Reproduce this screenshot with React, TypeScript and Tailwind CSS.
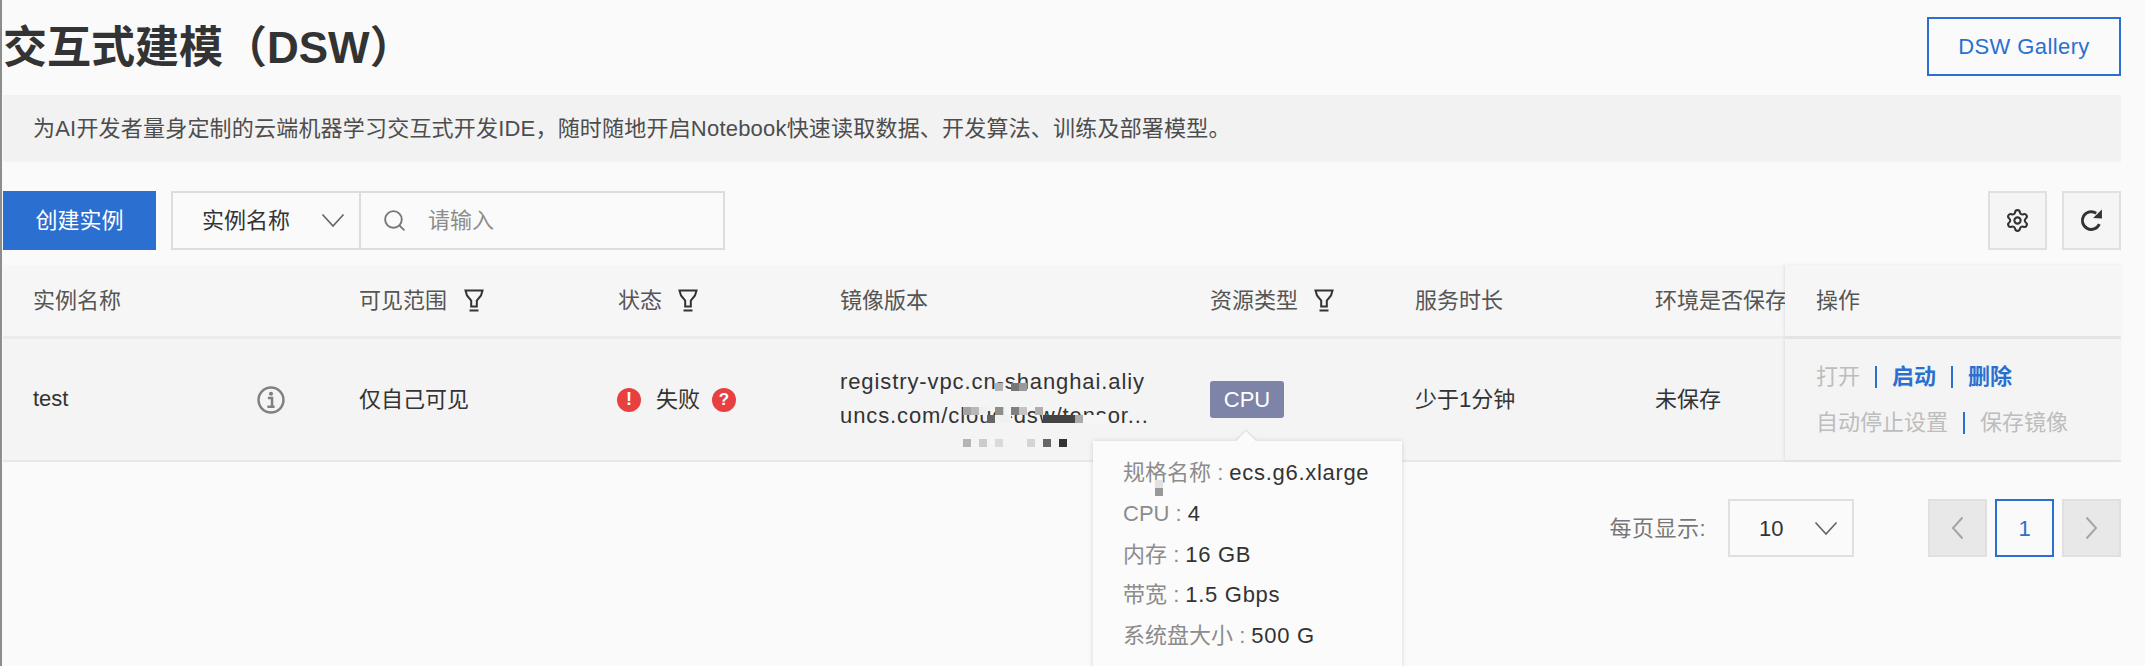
import { Search, Settings } from "lucide-react"

const font = "font-['Liberation_Sans','Noto_Sans_CJK_SC',sans-serif]"

// mosaic blocks sitting over the image name
const mosaic = [
  "left-[993px] top-[383px] w-[8px] h-[8px] bg-[#b4b4b4]",
  "left-[1009px] top-[383px] w-[8px] h-[8px] bg-[#777777]",
  "left-[1017px] top-[383px] w-[8px] h-[8px] bg-[#999999]",
  "left-[961px] top-[407px] w-[8px] h-[8px] bg-[#a3a3a3]",
  "left-[969px] top-[407px] w-[8px] h-[8px] bg-[#b8b8b8]",
  "left-[977px] top-[407px] w-[8px] h-[8px] bg-[#eeeeee]",
  "left-[993px] top-[407px] w-[8px] h-[8px] bg-[#8e8e8e]",
  "left-[1009px] top-[407px] w-[8px] h-[8px] bg-[#808080]",
  "left-[1017px] top-[407px] w-[8px] h-[8px] bg-[#c4c4c4]",
  "left-[1033px] top-[407px] w-[8px] h-[8px] bg-[#aeaeae]",
  "left-[985px] top-[415px] w-[8px] h-[8px] bg-[#666666]",
  "left-[993px] top-[415px] w-[16px] h-[8px] bg-[#f1f1f1]",
  "left-[1041px] top-[415px] w-[32px] h-[8px] bg-[#444444]",
  "left-[1073px] top-[415px] w-[8px] h-[8px] bg-[#aaaaaa]",
  "left-[1081px] top-[415px] w-[24px] h-[8px] bg-[#f6f6f6]",
  "left-[961px] top-[439px] w-[8px] h-[8px] bg-[#b4b4b4]",
  "left-[977px] top-[439px] w-[8px] h-[8px] bg-[#cccccc]",
  "left-[993px] top-[439px] w-[8px] h-[8px] bg-[#dadada]",
  "left-[1025px] top-[439px] w-[8px] h-[8px] bg-[#d4d4d4]",
  "left-[1041px] top-[439px] w-[8px] h-[8px] bg-[#666666]",
  "left-[1057px] top-[439px] w-[8px] h-[8px] bg-[#333333]",
  "left-[1153px] top-[480px] w-[8px] h-[8px] bg-[#e2e2e2] z-30",
  "left-[1153px] top-[488px] w-[8px] h-[8px] bg-[#999999] z-30",
]

const specs = [
  { label: "规格名称", value: "ecs.g6.xlarge" },
  { label: "CPU", value: "4" },
  { label: "内存", value: "16 GB" },
  { label: "带宽", value: "1.5 Gbps" },
  { label: "系统盘大小", value: "500 G" },
]

function FilterIcon() {
  return (
    <svg width="20" height="23" viewBox="0 0 20 23" fill="none" stroke="#333" strokeWidth="2" className="shrink-0">
      <path d="M1.5 1.5h17l-1.5 5-4.2 5v6H7.2v-6L3 6.500z" />
      <path d="M5.500 21.500h9" />
    </svg>
  )
}

function Chevron() {
  return (
    <svg width="24" height="15" viewBox="0 0 24 15" fill="none" stroke="#666" strokeWidth="1.700">
      <path d="M1.500 1.500 12 13 22.500 1.500" />
    </svg>
  )
}

function RefreshIcon() {
  return (
    <svg width="25" height="25" viewBox="0 0 24 24" fill="none" className="text-[#333]">
      <path d="M19.500 15.500A8.500 8.500 0 1 1 16.500 5" stroke="currentColor" strokeWidth="2.800" />
      <path d="M13.500 9.500 22 10V1.500z" fill="currentColor" />
    </svg>
  )
}

function PrevNext({ dir }: { dir: "prev" | "next" }) {
  return (
    <button className="flex h-[58px] w-[59px] items-center justify-center border-2 border-[#e0e0e0] bg-[#e8e8e8]">
      <svg width="13" height="24" viewBox="0 0 13 24" fill="none" stroke="#a5a5a5" strokeWidth="2">
        <path d={dir === "prev" ? "M11.500 1.500 2 12l9.500 10.500" : "M1.500 1.500 11 12 1.500 22.500"} />
      </svg>
    </button>
  )
}

export default function App() {
  return (
    <div className={`relative h-[666px] overflow-hidden border-l-2 border-[#8d8d8d] bg-[#fafafa] pl-px pr-[24px] text-[22px] text-[#333] ${font}`}>
      {/* title */}
      <div className="flex h-[95px] items-center justify-between pb-[2px]">
        <h1 className="mt-[3px] text-[44px] leading-none font-bold text-[#333]">交互式建模（DSW）</h1>
        <button className="h-[59px] w-[194px] border-2 border-[#2b6fd0] text-[22px] tracking-[0.4px] text-[#2b6fd0]">DSW Gallery</button>
      </div>

      <div className="flex h-[67px] items-center bg-[#f2f2f2] pl-[30px] tracking-[0.2px] text-[#4d4d4d]">
        为AI开发者量身定制的云端机器学习交互式开发IDE，随时随地开启Notebook快速读取数据、开发算法、训练及部署模型。
      </div>

      {/* toolbar */}
      <div className="mt-[29px] flex h-[59px] items-stretch">
        <button className="w-[153px] bg-[#2b6fd0] text-white">创建实例</button>
        <div className="ml-[15px] flex w-[554px] border-2 border-[#dddddd] bg-[#fafafa]">
          <div className="flex w-[188px] items-center justify-between border-r-2 border-[#dddddd] pl-[29px] pr-[14px]">
            <span>实例名称</span>
            <Chevron />
          </div>
          <div className="flex flex-1 items-center pl-[21px] text-[#8c8c8c]">
            <Search size={25} strokeWidth={1.800} className="text-[#777]" />
            <span className="ml-[21px]">请输入</span>
          </div>
        </div>
        <div className="ml-auto flex gap-[15px]">
          <button className="flex w-[59px] items-center justify-center border-2 border-[#e0e0e0] bg-[#f5f5f5]">
            <Settings size={25} strokeWidth={2} className="text-[#333]" />
          </button>
          <button className="flex w-[59px] items-center justify-center border-2 border-[#e0e0e0] bg-[#f5f5f5]">
            <RefreshIcon />
          </button>
        </div>
      </div>

      {/* table */}
      <div className="mt-[15px]">
        <div className="grid h-[74px] grid-cols-[326px_260px_221px_370px_205px_240px_160px_336px] border-b-[3px] border-[#ebebeb] bg-[#f6f6f6] text-[#555]">
          <div className="flex items-center pl-[30px]">实例名称</div>
          <div className="flex items-center gap-[17px] pl-[30px]">可见范围<FilterIcon /></div>
          <div className="flex items-center gap-[16px] pl-[29px]">状态<FilterIcon /></div>
          <div className="flex items-center pl-[30px]">镜像版本</div>
          <div className="flex items-center gap-[16px] pl-[30px]">资源类型<FilterIcon /></div>
          <div className="flex items-center pl-[30px]">服务时长</div>
          <div className="flex items-center overflow-hidden whitespace-nowrap pl-[30px]">环境是否保存</div>
          <div className="relative z-10 flex items-center pl-[31px] shadow-[-1px_0_3px_rgba(0,0,0,0.09)]">操作</div>
        </div>

        <div className="grid h-[123px] grid-cols-[326px_260px_221px_370px_205px_240px_160px_336px] border-b-2 border-[#e8e8e8] bg-[#f4f4f4]">
          <div className="flex items-center justify-between pl-[30px] pr-[44px]">
            <span className="mb-[3px]">test</span>
            <svg width="28" height="28" viewBox="0 0 27 27" fill="none" stroke="#808080">
              <circle cx="13.500" cy="13.500" r="12" strokeWidth="2.400" />
              <circle cx="13.500" cy="7.500" r="2" fill="#808080" stroke="none" />
              <path d="M10.500 11.500h4v8M10 20h7" strokeWidth="2.400" />
            </svg>
          </div>
          <div className="flex items-center pl-[30px]">仅自己可见</div>
          <div className="flex items-center pl-[28px]">
            <span className="flex h-[24px] w-[24px] items-center justify-center rounded-full bg-[#e84040] text-[18px] font-bold text-white">!</span>
            <span className="ml-[15px]">失败</span>
            <span className="ml-[12px] flex h-[24px] w-[24px] items-center justify-center rounded-full bg-[#e84040] text-[17px] font-bold text-white">?</span>
          </div>
          <div className="flex items-center pl-[30px] leading-[34px] tracking-[0.9px]">
            <span className="w-[330px] mb-[2px] whitespace-nowrap">registry-vpc.cn-shanghai.aliy<br />uncs.com/cloud-dsw/tensor...</span>
          </div>
          <div className="relative flex items-center pl-[30px]">
            <span className="flex h-[37px] w-[74px] items-center justify-center rounded-[3px] bg-[#7d84a8] text-white">CPU</span>
            {/* spec popover */}
            <div className="absolute left-[-87px] top-[102px] z-20 h-[240px] w-[309px] bg-[#fbfbfb] pl-[30px] pt-[12px] shadow-[0_0_5px_rgba(0,0,0,0.14)]">
              <div className="absolute left-[146px] top-[-7px] h-[14px] w-[14px] rotate-45 bg-[#fbfbfb] shadow-[-1px_-1px_2px_rgba(0,0,0,0.1)]" />
              {specs.map((spec) => (
                <div key={spec.label} className="relative h-[40.800px] leading-[40.800px] whitespace-nowrap">
                  <span className="text-[#8c8c8c]">{spec.label} : </span>
                  <span className="tracking-[0.7px]">{spec.value}</span>
                </div>
              ))}
            </div>
          </div>
          <div className="flex items-center pl-[30px]">少于1分钟</div>
          <div className="flex items-center pl-[30px]">未保存</div>
          <div className="relative z-10 flex flex-col justify-center gap-[22px] pl-[31px] shadow-[-1px_0_3px_rgba(0,0,0,0.09)]">
            <div className="flex h-[24px] items-center leading-none">
              <span className="text-[#bdbdbd]">打开</span>
              <span className="mx-[15px] h-[22px] w-[2px] bg-[#2b6fd0]" />
              <span className="font-bold text-[#2b6fd0]">启动</span>
              <span className="mx-[15px] h-[22px] w-[2px] bg-[#2b6fd0]" />
              <span className="font-bold text-[#2b6fd0]">删除</span>
            </div>
            <div className="flex h-[24px] items-center leading-none">
              <span className="text-[#bdbdbd]">自动停止设置</span>
              <span className="mx-[15px] h-[22px] w-[2px] bg-[#2b6fd0]" />
              <span className="text-[#bdbdbd]">保存镜像</span>
            </div>
          </div>
        </div>
      </div>

      {/* pagination */}
      <div className="mt-[37px] flex h-[58px] items-center justify-end">
        <span className="tracking-[0.5px] text-[#777]">每页显示:</span>
        <div className="ml-[22px] flex h-full w-[126px] items-center justify-between border-2 border-[#e0e0e0] pl-[29px] pr-[14px]">
          <span>10</span>
          <Chevron />
        </div>
        <div className="ml-[74px] flex gap-[8px]">
          <PrevNext dir="prev" />
          <button className="h-[58px] w-[59px] border-2 border-[#2b6fd0] text-[#2b6fd0]">1</button>
          <PrevNext dir="next" />
        </div>
      </div>

      {mosaic.map((cls) => (
        <div key={cls} className={`absolute ${cls}`} />
      ))}
    </div>
  )
}
